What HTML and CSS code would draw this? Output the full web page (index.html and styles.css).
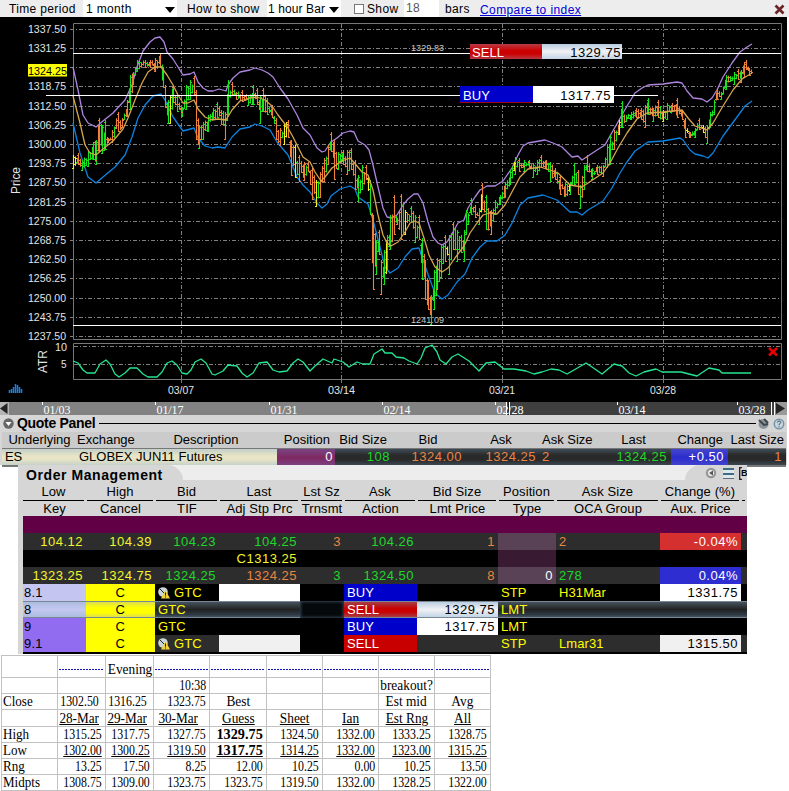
FILE: index.html
```html
<!DOCTYPE html>
<html lang="en">
<head>
<meta charset="utf-8">
<title>ES futures chart</title>
<link rel="stylesheet" href="styles.css">
</head>
<body>
<div class="toolbar">
  <span class="lab l1">Time period</span>
  <span class="select s1">1 month<i></i></span>
  <span class="lab l2">How to show</span>
  <span class="select s2">1 hour Bar<i></i></span>
  <span class="box"></span><span class="lab l3">Show</span>
  <span class="field">18</span>
  <span class="lab l4">bars</span>
  <a class="link">Compare to index</a>
  <svg class="close" width="11" height="11" viewBox="0 0 11 11"><path d="M1.5 1.5L9.5 9.5M9.5 1.5L1.5 9.5" stroke="#6b2424" stroke-width="2.6"/></svg>
</div>

<div class="chart">
  <svg class="plot" width="787" height="385" viewBox="0 17 787 385">
    <g id="grid" class="grid"></g>
    <path class="grid" d="M181.5 24V379M341.5 24V379M502.5 24V379M663.5 24V379M74 346.5H781M74 364.5H781"/>
    <path class="frame" d="M73.5 339.5V23.5H781.5V339.5ZM73.5 379.5V343.5H781.5V379.5ZM181.5 380v3M341.5 380v3M502.5 380v3M663.5 380v3"/>
    <polyline class="band lower" points="73,123 80,153 88,177 96,183 103,177 115,167 125,155 132,137 138,118 145,105 153,96 161,94 165,100 173,117 183,131 194,128 198,138 205,146 212,148 218,147 225,148 232,137 240,129 250,127 255,124 262,126 270,130 277,142 288,155 293,167 297,177 303,185 310,192 317,203 322,208 327,204 331,196 340,189 350,186 355,189 358,197 368,204 373,220 380,247 385,267 390,273 398,268 405,257 412,249 419,248 423,260 430,280 435,293 442,299 448,295 457,282 465,274 472,258 480,247 487,241 497,241 505,235 512,223 520,205 528,198 543,195 557,200 570,212 577,212 582,215 588,210 603,201 612,188 620,173 627,162 635,151 648,142 663,141 680,138 683,140 690,150 695,154 703,156 708,158 713,153 723,136 737,117 745,106 752,101"/>
    <polyline class="band upper" points="73,67 78,90 83,115 88,123 96,127 103,121 113,113 125,100 132,85 137,67 143,51 150,42 155,38 160,37 164,42 167,52 173,59 178,67 183,75 190,74 194,72 198,82 203,88 208,91 213,91 219,89 226,91 228,85 233,78 240,72 250,70 255,68 262,70 268,73 273,77 280,88 288,99 293,108 297,115 303,128 310,135 317,148 322,152 325,151 331,142 337,138 343,133 350,131 354,132 358,141 365,145 369,150 373,165 378,187 383,208 387,217 392,218 397,215 403,205 408,199 414,194 418,194 423,203 428,222 433,237 438,243 442,245 447,242 453,232 458,223 464,220 468,208 475,197 480,190 487,186 495,186 503,181 512,168 518,155 523,146 528,143 545,140 553,143 562,147 572,157 578,156 582,160 588,156 597,150 605,145 610,136 618,122 627,106 635,93 642,88 648,85 663,84 677,82 682,83 687,91 693,98 702,99 707,102 712,98 717,90 723,77 732,63 740,52 747,47 752,44"/>
    <g id="bars" class="bars"></g>
    <polyline class="band middle" points="73,96 80,123 85,145 90,153 96,155 103,149 113,141 123,129 128,118 135,100 142,83 148,72 155,67 161,67 167,75 173,85 178,95 183,103 188,103 194,100 198,109 205,117 212,120 218,119 226,120 232,110 240,101 250,98 257,97 265,100 272,106 278,115 288,128 293,137 297,145 303,157 310,162 315,172 321,181 325,177 332,168 342,161 350,158 357,166 362,172 368,175 373,190 378,215 383,235 387,243 391,246 398,242 405,232 410,223 415,221 419,223 424,238 429,255 435,267 442,272 448,268 455,258 464,246 470,233 477,223 483,215 490,213 497,214 505,205 513,190 520,177 528,169 540,167 550,170 558,173 570,185 582,187 588,183 603,173 610,163 618,148 627,133 637,119 647,113 663,112 682,110 688,118 695,126 707,130 713,123 723,106 733,90 742,79 752,73"/>
    <polyline class="band atr" points="73,361 78,363 83,370 87,373 95,373 100,364 106,360 110,364 115,374 119,377 125,373 130,368 137,368 143,374 148,377 157,377 162,372 167,363 172,361 177,365 182,373 187,374 191,370 195,362 201,359 206,363 212,374 215,375 223,371 228,365 237,366 242,373 247,377 253,373 259,363 267,362 273,370 279,372 287,371 293,363 298,359 303,362 310,371 315,366 323,359 332,363 334,359 343,362 349,367 357,362 363,364 370,364 374,354 382,349 385,353 392,353 396,357 404,358 409,361 417,364 421,358 425,348 432,345 437,352 440,360 446,364 452,357 458,354 469,361 479,371 486,363 495,362 504,369 514,369 526,371 534,374 542,372 551,369 559,370 567,374 574,370 586,363 592,367 602,374 614,364 622,366 629,373 636,376 644,372 656,369 662,372 681,372 697,376 709,368 719,370 722,373 751,373"/>
    <path class="level" d="M73 53.5H781M46 95.5H658M73 325.5H781"/>
    <g class="small"><text x="411" y="51" textLength="33">1329.83</text><text x="411" y="323" textLength="33">1241.09</text></g>
    <rect x="28" y="64" width="39" height="12.5" fill="#ff0"/>
    <g id="axis" class="axis"></g>
    <text class="axis" x="28" y="74.5" textLength="39" lengthAdjust="spacingAndGlyphs" style="fill:#000">1324.25</text>
    <g class="axis"><text x="55" y="351" textLength="12" lengthAdjust="spacingAndGlyphs">10</text><text x="61" y="368">5</text>
      <text x="168" y="393.500" textLength="26" lengthAdjust="spacingAndGlyphs">03/07</text><text x="328" y="393.500" textLength="27" lengthAdjust="spacingAndGlyphs">03/14</text><text x="489" y="393.500" textLength="26" lengthAdjust="spacingAndGlyphs">03/21</text><text x="650" y="393.500" textLength="26" lengthAdjust="spacingAndGlyphs">03/28</text></g>
    <g class="vert"><text transform="translate(19.5 194) rotate(-90)" textLength="27">Price</text><text transform="translate(46.500 373) rotate(-90)" textLength="23">ATR</text></g>
    <path d="M769 348L777 355.500M777 348L769 355.500" stroke="#e00" stroke-width="2.500"/>
    <path d="M9.500 393v-3M11.500 393v-4M13.500 393v-6M15.500 393v-9M17.500 393v-8M19.500 393v-6M21.500 393v-4" stroke="#1e7fe0" stroke-width="1.500"/>
  </svg>
  <div class="tag sell"><b>SELL</b><span>1329.75</span></div>
  <div class="tag buy"><b>BUY</b><span>1317.75</span></div>
</div>

<svg class="scroll" width="787" height="13" viewBox="0 0 787 13">
  <rect width="787" height="13" fill="#828282"/><rect x="508" width="263" height="13" fill="#3f3f3f"/>
  <rect width="9" height="13" fill="#b5b5b5"/><path d="M7.500 1v11L0 6.500Z" fill="#222"/>
  <rect x="776" width="11" height="13" fill="#999"/><path d="M776 1v11L785 6.500Z" fill="#222"/>
  <path d="M42.500 0v3M155.500 0v3M269.500 0v3M382.500 0v3M495.500 0v3M617.500 0v3M737.500 0v3M506.500 0v13M509.500 0v13M771.500 0v13M774.500 0v13" stroke="#fff"/>
  <path d="M508 0v13M773 0v13" stroke="#000"/>
  <g><text x="43.500" y="11.500" textLength="27">01/03</text><text x="156.500" y="11.500" textLength="27">01/17</text><text x="270.500" y="11.500" textLength="27">01/31</text><text x="383.500" y="11.500" textLength="27">02/14</text><text x="496.500" y="11.500" textLength="27">02/28</text><text x="618.500" y="11.500" textLength="27">03/14</text><text x="738.500" y="11.500" textLength="27">03/28</text></g>
</svg>

<div class="quote">
  <div class="qtitle">
    <svg width="11" height="11" viewBox="0 0 11 11"><circle cx="5.500" cy="5.500" r="5.200" fill="#666"/><path d="M2.500 4h6L5.500 8Z" fill="#fff"/></svg>
    <h2>Quote Panel</h2><hr>
    <svg width="27" height="12" viewBox="0 0 27 12"><circle cx="5.500" cy="6" r="5" fill="#89949c"/><path d="M1 2l5 5 4-1M6 1l4 4" stroke="#3f474d" stroke-width="2" fill="none"/><circle cx="21" cy="6" r="5.500" fill="#7893a6"/><circle cx="21" cy="6" r="4" fill="#c5d5df"/><path d="M19.500 4.500q0-1.500 1.600-1.500t1.600 1.500q0 1-1.600 1.700v1M21 8.300v1" stroke="#456" fill="none"/></svg>
  </div>
  <table class="qt">
    <colgroup><col class="q0"><col class="q1"><col class="q2"><col class="q3"><col class="q4"><col class="q5"><col class="q6"><col class="q7"><col class="q8"><col class="q9"><col class="q10"></colgroup>
    <tr><th>Underlying</th><th class="left">Exchange</th><th class="desc">Description</th><th class="right">Position</th><th class="right">Bid Size</th><th>Bid</th><th>Ask</th><th class="left asz">Ask Size</th><th class="lst">Last</th><th class="right">Change</th><th class="right last">Last Size</th></tr>
    <tr class="data"><td class="inst tl">ES</td><td class="inst globex" colspan="2">GLOBEX JUN11 Futures</td><td class="pos">0</td><td class="g">108</td><td class="o">1324.00</td><td class="o">1324.25</td><td class="o tl two">2</td><td class="g l4px">1324.25</td><td class="chg l4px">+0.50</td><td class="o l4px">1</td></tr>
  </table>
</div>

<div class="orders">
  <div class="otitle"><h2>Order Management</h2><div class="tools"><svg width="37" height="13" viewBox="0 0 37 13"><circle cx="6" cy="6" r="5.200" fill="#969696"/><circle cx="6" cy="6" r="3" fill="#eee"/><path d="M8 3.500v5L4 6Z" fill="#555"/><path d="M18 1h11v11H18z" fill="#dbe8ee"/><path d="M18 1h11v2H18zM18 6h11v2H18z" fill="#3f6b83"/><path d="M18 11.500h11" stroke="#667"/><path d="M42 .7h-7.300v11.600H42" fill="#ddd" stroke="#222" stroke-width="1.300"/></svg><b>B</b></div></div>
  <table class="ot">
    <colgroup><col class="c0"><col class="c1"><col class="c2"><col class="c3"><col class="c4"><col class="c5"><col class="c6"><col class="c7"><col class="c8"><col class="c9"><col class="c10"></colgroup>
    <tr class="h1"><th><p>Low</p></th><th><p>High</p></th><th><p>Bid</p></th><th><p>Last</p></th><th><p>Lst Sz</p></th><th><p>Ask</p></th><th><p>Bid Size</p></th><th><p>Position</p></th><th><p>Ask Size</p></th><th><p>Change (%)</p></th><th><p>&nbsp;</p></th></tr>
    <tr class="h2"><th>Key</th><th>Cancel</th><th>TIF</th><th>Adj Stp Prc</th><th>Trnsmt</th><th>Action</th><th>Lmt Price</th><th>Type</th><th>OCA Group</th><th>Aux. Price</th><th></th></tr>
    <tr class="maroon"><td colspan="11"></td></tr>
    <tr class="dark"><td class="y">104.12</td><td class="y">104.39</td><td class="g">104.23</td><td class="g">104.25</td><td class="o">3</td><td class="g">104.26</td><td class="o">1</td><td class="plum"></td><td class="o tl">2</td><td class="redc">-0.04%</td><td></td></tr>
    <tr><td></td><td></td><td></td><td class="y">C1313.25</td><td></td><td></td><td></td><td class="plum2"></td><td></td><td></td><td></td></tr>
    <tr class="dark"><td class="y">1323.25</td><td class="y">1324.75</td><td class="g">1324.25</td><td class="o">1324.25</td><td class="g">3</td><td class="g">1324.50</td><td class="o">8</td><td class="plum w">0</td><td class="g tl">278</td><td class="bluec">0.04%</td><td></td></tr>
    <tr class="ord"><td class="k1">8.1</td><td class="can">C</td><td class="tif"><svg class="warn" width="12" height="12" viewBox="0 0 12 12"><circle cx="5" cy="5" r="4.800" fill="#c9d5d8"/><path d="M2 2l4 4" stroke="#222"/><path d="M7.500 3L12 11.500H3Z" fill="#f2d43a"/><path d="M7.500 5.500v3.200M7.500 9.500v1" stroke="#222"/></svg>GTC</td><td class="white"></td><td></td><td class="buyc">BUY</td><td></td><td class="typ">STP</td><td class="typ">H31Mar</td><td class="white">1331.75</td><td></td></tr>
    <tr class="ord sel"><td class="k1">8</td><td class="can">C</td><td class="tif">GTC</td><td></td><td class="inset"></td><td class="sellc">SELL</td><td class="ice">1329.75</td><td class="typ">LMT</td><td></td><td></td><td></td></tr>
    <tr class="ord"><td class="k2">9</td><td class="can">C</td><td class="tif">GTC</td><td></td><td></td><td class="buyc">BUY</td><td class="white">1317.75</td><td class="typ">LMT</td><td></td><td></td><td></td></tr>
    <tr class="ord dark"><td class="k2">9.1</td><td class="can">C</td><td class="tif"><svg class="warn" width="12" height="12" viewBox="0 0 12 12"><circle cx="5" cy="5" r="4.800" fill="#c9d5d8"/><path d="M2 2l4 4" stroke="#222"/><path d="M7.500 3L12 11.500H3Z" fill="#f2d43a"/><path d="M7.500 5.500v3.200M7.500 9.500v1" stroke="#222"/></svg>GTC</td><td class="pale"></td><td class="blk"></td><td class="sellc">SELL</td><td></td><td class="typ">STP</td><td class="typ">Lmar31</td><td class="pale">1315.50</td><td></td></tr>
  </table>
</div>

<table class="sheet">
  <colgroup><col class="s56"><col class="s48"><col class="s48"><col class="s56"><col class="s57"><col class="s56"><col class="s56"><col class="s56"><col class="s56"></colgroup>
  <tr class="r22"><td></td><td class="dash"></td><td class="c eve"><span>Evening</span></td><td class="dash"></td><td class="dash"></td><td class="dash"></td><td class="dash"></td><td class="dash"></td><td class="dash"></td></tr>
  <tr><td></td><td></td><td></td><td><span>10:38</span></td><td></td><td></td><td></td><td class="c"><span>breakout?</span></td><td></td></tr>
  <tr><td class="n"><span>Close</span></td><td class="in"><span>1302.50</span></td><td class="in"><span>1316.25</span></td><td><span>1323.75</span></td><td class="c"><span>Best</span></td><td></td><td></td><td class="c"><span>Est mid</span></td><td class="c"><span>Avg</span></td></tr>
  <tr class="u r17"><td></td><td class="in d"><span>28-Mar</span></td><td class="in d"><span>29-Mar</span></td><td class="in2 d"><span>30-Mar</span></td><td class="c"><span>Guess</span></td><td class="c"><span>Sheet</span></td><td class="c"><span>Ian</span></td><td class="c"><span>Est Rng</span></td><td class="c"><span>All</span></td></tr>
  <tr><td class="n"><span>High</span></td><td><span>1315.25</span></td><td><span>1317.75</span></td><td><span>1327.75</span></td><td class="bold"><span>1329.75</span></td><td><span>1324.50</span></td><td><span>1332.00</span></td><td><span>1333.25</span></td><td><span>1328.75</span></td></tr>
  <tr class="u"><td class="n"><span class="plain">Low</span></td><td><span>1302.00</span></td><td><span>1300.25</span></td><td><span>1319.50</span></td><td class="bold"><span>1317.75</span></td><td><span>1314.25</span></td><td><span>1332.00</span></td><td><span>1323.00</span></td><td><span>1315.25</span></td></tr>
  <tr><td class="n"><span>Rng</span></td><td><span>13.25</span></td><td><span>17.50</span></td><td><span>8.25</span></td><td><span>12.00</span></td><td><span>10.25</span></td><td><span>0.00</span></td><td><span>10.25</span></td><td><span>13.50</span></td></tr>
  <tr><td class="n"><span>Midpts</span></td><td><span>1308.75</span></td><td><span>1309.00</span></td><td><span>1323.75</span></td><td><span>1323.75</span></td><td><span>1319.50</span></td><td><span>1332.00</span></td><td><span>1328.25</span></td><td><span>1322.00</span></td></tr>
</table>
<script src="chart.js"></script>
</body>
</html>
```
FILE: styles.css
```css
* { box-sizing: border-box; }
body { margin: 0; width: 789px; height: 791px; overflow: hidden; background: #fff; font: 13px/17px "Liberation Sans", Arial, sans-serif; color: #000; }
h2, p { margin: 0; }
svg { display: block; }

.toolbar { width: 789px; height: 17px; background: #ededed; display: flex; align-items: center; white-space: nowrap; font-size: 12px; line-height: 15px; overflow: hidden; }
.lab { letter-spacing: .35px; padding-top: 2px; }
.l1 { width: 83px; padding-left: 9px; }
.select { height: 17px; background: #fff; display: flex; align-items: center; justify-content: space-between; padding: 2px 2px 0; letter-spacing: .35px; }
.select i { border: 5px solid transparent; border-top: 6px solid #000; border-bottom: 0; }
.s1 { width: 94px; padding-left: 3px; }
.l2 { width: 90px; padding-left: 10px; }
.s2 { width: 74px; padding-left: 1px; letter-spacing: .1px; }
.box { width: 10px; height: 10px; background: #fff; border: 1px solid #777; margin: 0 3px 0 13px; }
.l3 { width: 37px; }
.field { width: 35px; height: 17px; background: #fff; padding: 1px 0 0 2px; color: #555; letter-spacing: .4px; }
.l4 { width: 41px; padding-left: 6px; }
.link { color: #0000d8; text-decoration: underline; letter-spacing: .4px; margin-top: 3px; }
.close { margin: 2px 4px 0 auto; }

.chart { width: 787px; height: 385px; background: #000; position: relative; }
.grid { stroke: #808080; stroke-dasharray: 4 2 1 2; fill: none; }
.frame { stroke: #777; fill: none; }
.band { fill: none; stroke-width: 1.3; stroke-linejoin: round; }
.upper { stroke: #ad85de; }
.middle { stroke: #d6a54c; }
.lower { stroke: #0b83e3; }
.atr { stroke: #25e590; }
.bars path { fill: none; stroke-width: 1.1; }
.level { stroke: #fff; }
.axis, .axis text { fill: #e4e4e4; font-size: 10px; }
.small text { fill: #c8c8c8; font-size: 9px; }
.vert text { fill: #e4e4e4; font-size: 12px; }
.tag { position: absolute; display: flex; font-size: 13px; white-space: nowrap; }
.tag b { font-weight: 400; color: #fff; letter-spacing: .1px; padding-left: 2px; }
.tag span { text-align: right; letter-spacing: .55px; }
.sell { left: 470px; top: 27px; width: 152px; height: 15px; line-height: 17px; }
.sell b { width: 72px; background: linear-gradient(#b83a44, #c00 45%, #c00 65%, #b83a44); }
.sell span { flex: 1; padding-right: 1px; background: linear-gradient(#b8cde0, #f0f1f4 50%, #c3d4e6); }
.buy { left: 460px; top: 69px; width: 154px; height: 17px; line-height: 19px; }
.buy b { width: 73px; padding-left: 3px; background: #0000cb; border-bottom: 1px solid #a00018; }
.buy span { flex: 1; padding-right: 3px; background: #fff; }

.scroll text { fill: #fff; font: 12px "Liberation Serif", serif; }

.quote { width: 787px; height: 50px; background: #d6d6d6; }
.qtitle { height: 17px; display: flex; align-items: center; padding: 0 2px 0 3px; }
.qtitle h2 { font-size: 14px; margin-left: 3px; letter-spacing: -.3px; }
.qtitle hr { flex: 1; border: 0; height: 1px; background: #000; margin: 0 2px 0 4px; }
table { border-collapse: collapse; table-layout: fixed; }
td, th { padding: 0; font-weight: 400; white-space: nowrap; overflow: hidden; }
.qt { width: 784px; margin-left: 2px; }
.qt th { height: 16px; line-height: 16px; background: #cbcbcb; letter-spacing: 0; }
.qt .desc { padding-right: 22px; }
.q0 { width: 75px; } .q1 { width: 80px; } .q2 { width: 120px; } .q3 { width: 58px; } .q4 { width: 57px; } .q5 { width: 72px; } .q6 { width: 74px; } .q7 { width: 63px; } .q8 { width: 70px; } .q9 { width: 57px; } .q10 { width: 58px; }
.qt .left { text-align: left; } .qt .right { text-align: right; padding-right: 5px; }
.qt .asz { padding-left: 4px; } .qt .lst { padding-right: 5px; }
.qt .last { padding-right: 2px; }
.data td { height: 17px; line-height: 15px; text-align: right; padding-right: 2px; letter-spacing: .5px; background: linear-gradient(#3d4b57, #292929 35%, #292929 65%, #3d4b57); border-top: 1px solid #777; border-bottom: 2px solid #777; }
.data .l4px { padding-right: 4px; }
.data .inst { background: linear-gradient(#c3d0ca, #e8e4c5 40%, #e8e4c5 60%, #c3d0ca); text-align: left; padding-left: 3px; letter-spacing: -.2px; }
.data .globex { padding-left: 2px; letter-spacing: 0; }
.data .pos { background: linear-gradient(#794381, #7f2761 50%, #794381); color: #fff; }
.data .chg { background: linear-gradient(#4444cc, #2c2ccf 50%, #4444cc); color: #fff; }
td.g { color: #1fd72b; } td.o { color: #e98543; } td.y { color: #f4f42c; } td.w { color: #fff; }
.data .tl { text-align: left; } .data .two { padding-left: 4px; }

.orders { margin-left: 18px; width: 729px; height: 189px; background: #d6d6d6; overflow: hidden; }
.otitle { display: flex; justify-content: space-between; height: 15px; background: #ededed; }
.otitle h2 { width: 165px; padding: 2px 0 0 8px; line-height: 17px; font-size: 14px; letter-spacing: .58px; background: #d6d6d6; border-top-right-radius: 16px 15px; white-space: nowrap; }
.tools { width: 62px; padding: 2px 0 0 20px; background: #d6d6d6; border-top-left-radius: 16px 15px; display: flex; overflow: hidden; }
.tools b { font-size: 9px; line-height: 13px; margin-left: -1px; }
.tools svg { flex: none; } .tools b { flex: none; }
.ot { width: 724px; margin-left: 5px; background: #000; border-bottom: 2px solid #000; }
.c0 { width: 63px; } .c1 { width: 69px; } .c2 { width: 64px; } .c3 { width: 81px; } .c4 { width: 44px; } .c5 { width: 73px; } .c6 { width: 81px; } .c7 { width: 58px; } .c8 { width: 104px; } .c9 { width: 81px; } .c10 { width: 6px; }
.ot th { background: #d6d6d6; letter-spacing: .1px; }
.h1 th { height: 21px; padding: 0 2px 0 1px; }
.h1 th p { height: 21px; line-height: 23px; border-bottom: 1px solid #000; }
.h1 th:first-child { padding-left: 0; }
.h2 th { height: 15px; line-height: 15px; }
.ot td { height: 17px; line-height: 16px; text-align: right; letter-spacing: .5px; padding: 1px 3px 0 0; }
.ot .maroon td { background: #620045; }
.dark td { background: #2d2d2d; }
.ot .tl { text-align: left; padding-left: 3px; }
.dark .plum { background: #594255; } .ot .plum2 { background: #391a33; }
.dark .redc { background: #d53030; color: #fff; } .dark .bluec { background: #2d2dd2; color: #fff; }
.ot .k1, .ot .k2 { text-align: left; padding-left: 1px; background: #c5c5f1; letter-spacing: .2px; }
.ot .k2 { background: #916cf0; }
.ot .can { background: #ff0; text-align: center; padding: 1px 0 0; }
.ord td.tif, .ord td.typ { color: #ff0; text-align: left; padding-left: 3px; letter-spacing: .1px; }
.warn { display: inline-block; vertical-align: -2px; margin: -2px 4px 0 0; }
.ot .buyc, .ot .sellc { background: #0000cb; color: #fff; text-align: left; padding-left: 3px; letter-spacing: .1px; }
.ot .sellc { background: #c90000; }
.ot .white { background: #fff; } .ot .pale { background: #f0f0f0; }
.ot .blk { background: #000; }
.ot .sel td { background: linear-gradient(#788793 1px, #46525d 1px, #222 50%, #2d3a45 80%, #46525d 16px, #788793 16px); }
.ot .sel .k1 { background: linear-gradient(#788793 1px, #aabddd 1px, #c5c8f1 50%, #aabddd 16px, #788793 16px); }
.ot .sel .can { background: linear-gradient(#788793 1px, #dce04e 1px, #ff0 40%, #ff0 70%, #dce04e 16px, #788793 16px); }
.ot .sel .sellc { background: linear-gradient(#788793 1px, #a44047 1px, #c90000 45%, #c90000 65%, #a44047 16px, #788793 16px); }
.ot .sel .ice { background: linear-gradient(#788793 1px, #b9cde0 1px, #f1f1f5 50%, #c3d5e6 16px, #788793 16px); }
.ot .sel .inset { background: #05090c; box-shadow: inset 0 0 3px 1px #345; }

.sheet { width: 490px; margin: 1px 0 0 1px; font: 15px/15px "Liberation Serif", "Times New Roman", serif; }
.s56 { width: 56px; } .s48 { width: 48px; } .s57 { width: 57px; }
.sheet td { height: 16px; border: 1px solid #c2c2c2; text-align: right; padding: 0 3px 0 0; overflow: visible; }
.sheet .r22 td { height: 22px; } .sheet .r17 td { height: 17px; }
.sheet span { display: inline-block; transform: scaleX(.79); transform-origin: 100% 50%; height: 15px; margin-left: -20px; }
.sheet td.c { text-align: center; padding: 0; }
.sheet .c span { transform: scaleX(.89); transform-origin: 50% 50%; margin: 0 -10px; }
.sheet .n { text-align: left; padding-left: 1px; }
.sheet .n span { transform: scaleX(.87); transform-origin: 0 50%; margin-left: 0; }
.sheet td.in { padding-right: 6px; } .sheet td.in2 { padding-right: 11px; }
.sheet .d span { transform: scaleX(.88); }
.sheet .bold { font-weight: 700; }
.sheet .bold span { transform: scaleX(.95); }
.sheet .eve { vertical-align: bottom; }
.sheet .u span { text-decoration: underline; }
.sheet .u .plain { text-decoration: none; }
.sheet .dash { background: repeating-linear-gradient(90deg, #1414b4 0 2px, transparent 2px 3px) 1px 13px / calc(100% - 2px) 1px no-repeat; }
```
FILE: chart.js
```js
const NS = 'http://www.w3.org/2000/svg';
const grid = document.getElementById('grid');
const axis = document.getElementById('axis');

// Price scale: one line every 6.25 points
for (let i = 0; i < 17; i++) {
  const y = 29.3 + i * 19.2;
  const line = document.createElementNS(NS, 'path');
  line.setAttribute('d', `M70 ${Math.floor(y) + .5}H781`);
  grid.appendChild(line);
  if (i === 2) continue;
  const t = document.createElementNS(NS, 'text');
  t.setAttribute('x', 28);
  t.setAttribute('y', Math.round(y + 3.4));
  t.setAttribute('textLength', 38);
  t.setAttribute('lengthAdjust', 'spacingAndGlyphs');
  t.textContent = (1337.5 - i * 6.25).toFixed(2);
  axis.appendChild(t);
}

// Session ranges: x, high, low
const ranges = `73,155,169 78,153,165 82,160,171 88,150,167 93,142,160 96,140,165 99,118,152 102,125,154 105,120,150 108,138,143 112,130,143 118,112,132 122,118,128 127,100,117 130,75,110 133,72,85 137,60,72 145,60,68 150,60,68 155,58,72 160,54,68 163,67,88 165,85,108 168,100,124 170,95,124 173,85,103 177,95,112 182,107,117 186,85,110 190,80,100 194,76,95 196,90,140 199,125,149 203,122,140 208,115,132 213,108,120 217,102,118 221,110,125 225,112,140 228,80,115 232,82,95 236,92,100 242,90,102 248,95,106 253,85,105 257,88,105 260,95,124 263,88,112 267,98,115 272,105,118 276,118,140 280,128,146 284,124,145 288,120,138 291,140,176 295,145,178 299,155,182 304,162,181 308,162,172 312,168,200 316,180,207 320,172,198 324,158,182 328,145,165 331,132,152 334,140,180 338,152,170 343,150,165 347,150,175 351,148,170 355,160,190 358,175,202 362,165,190 366,165,180 370,180,215 373,215,290 376,240,275 379,230,255 381,260,295 384,250,285 387,235,270 390,215,250 394,195,235 397,218,225 401,194,240 405,210,235 411,206,222 415,215,243 419,215,240 422,238,280 425,260,300 428,280,310 431,295,325 434,270,310 437,258,290 441,245,278 445,235,262 449,235,275 453,222,250 457,230,262 461,235,253 464,230,262 466,210,235 471,198,215 475,205,218 479,208,225 482,183,210 486,195,230 491,210,235 495,200,215 500,195,205 505,182,198 510,170,185 515,157,175 519,158,172 524,160,172 529,160,168 533,163,178 537,160,175 541,155,168 546,160,170 550,162,182 555,168,180 560,175,195 565,182,197 570,182,195 574,163,185 578,170,195 580,185,209 584,165,190 587,155,172 592,168,180 597,165,175 603,165,177 607,145,168 610,135,165 614,130,150 619,120,135 622,101,128 626,115,122 631,112,120 636,108,118 641,108,120 645,105,128 648,98,115 653,108,122 658,100,118 663,110,122 667,103,120 672,103,112 677,98,118 682,110,120 685,118,138 690,132,138 695,128,138 699,118,130 703,125,133 707,125,144 710,112,128 714,100,115 717,88,100 721,92,100 726,75,90 730,76,82 734,72,85 738,69,80 741,70,83 744,62,78 746,60,70 749,68,76 752,70,75`
  .split(' ').map(s => s.split(',').map(Number));

let seed = 11;
const rnd = () => (seed = (seed * 16807) % 2147483647) / 2147483647;
const paths = { '#16e41c': '', '#f0803a': '', '#f5ee28': '' };

function bar(x, high, low, up) {
  const roll = rnd();
  const color = roll < .06 ? '#f5ee28' : (roll < .78 ? up : !up) ? '#16e41c' : '#f0803a';
  const open = Math.round(up ? low - 1.5 : high + 1.5) + .5;
  const close = Math.round(up ? high + 1.5 : low - 1.5) + .5;
  paths[color] += `M${x} ${high.toFixed(1)}V${low.toFixed(1)}M${x - 1.5} ${open}H${x}M${x} ${close}h1.5`;
}

for (let i = 0; i < ranges.length - 1; i++) {
  const [x, hi, lo] = ranges[i];
  const [nx, nhi, nlo] = ranges[i + 1];
  const up = nhi + nlo < hi + lo;
  bar(x + .5, hi, lo, up);
  for (let px = x + 2; px < nx; px += 2) {
    const f = (px - x) / (nx - x);
    const h = hi + (nhi - hi) * f, l = lo + (nlo - lo) * f, size = l - h;
    bar(px + .5, h + size * rnd() * .4, l - size * rnd() * .4, up);
  }
}

const bars = document.getElementById('bars');
for (const [color, d] of Object.entries(paths)) {
  const p = document.createElementNS(NS, 'path');
  p.setAttribute('d', d);
  p.setAttribute('stroke', color);
  bars.appendChild(p);
}
```
